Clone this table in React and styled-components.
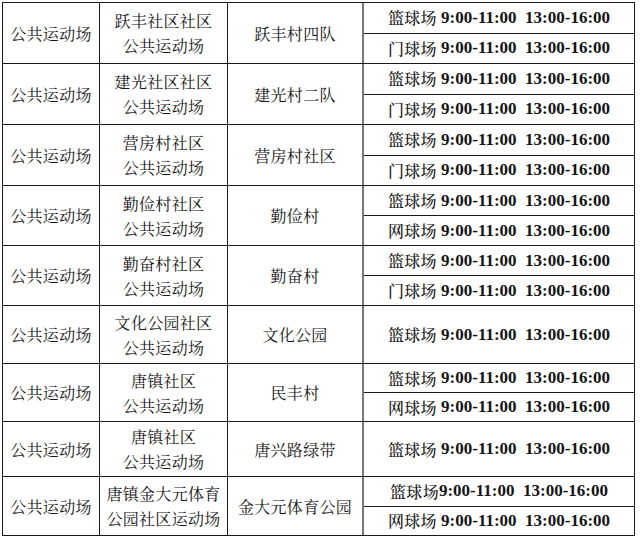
import React from "react";
import styled, { createGlobalStyle } from "styled-components";

const Global = createGlobalStyle`
  html, body { margin: 0; padding: 0; background: #fff; }
  body {
    font-family: "Noto Serif CJK SC", "Liberation Serif", "Noto Sans CJK SC", serif;
    color: #141414;
  }
`;

const Table = styled.div`
  margin: 2px 0 0 2px;
  width: 633px;
  border-top: 1.5px solid #1a1a1a;
  border-left: 1.5px solid #1a1a1a;
  border-right: 1.5px solid #1a1a1a;
  box-sizing: border-box;
`;

const Group = styled.div`
  display: grid;
  grid-template-columns: 97px 128px 136px 1fr;
  height: ${(p) => p.$h}px;
  border-bottom: 1.5px solid #1a1a1a;
  box-sizing: border-box;
`;

const Cell = styled.div`
  display: flex;
  align-items: center;
  justify-content: center;
  text-align: center;
  font-family: "Noto Serif CJK SC", "Noto Sans CJK SC", serif;
  font-size: 16px;
  font-weight: 400;
  line-height: 25px;
  border-right: ${(p) => (p.$grey ? "2px solid #777" : "1.5px solid #1a1a1a")};
  white-space: pre-line;
  letter-spacing: 0.3px;
`;

const Schedule = styled.div`
  display: flex;
  flex-direction: column;
`;

const Slot = styled.div`
  flex: 1;
  display: flex;
  align-items: center;
  justify-content: center;
  white-space: pre;
  & + & {
    border-top: 1.5px solid #1a1a1a;
  }
`;

const Court = styled.span`
  font-family: "Noto Serif CJK SC", "Noto Sans CJK SC", serif;
  font-size: 16px;
  font-weight: 500;
  letter-spacing: 0.3px;
`;

const Time = styled.span`
  font-family: "Liberation Serif", serif;
  font-size: 17px;
  font-weight: 700;
`;

const rows = [
  { h: 61, a: "跃丰社区社区\n公共运动场", b: "跃丰村四队", s: [["篮球场", " "], ["门球场", " "]] },
  { h: 61, a: "建光社区社区\n公共运动场", b: "建光村二队", s: [["篮球场", " "], ["门球场", " "]] },
  { h: 61, a: "营房村社区\n公共运动场", b: "营房村社区", s: [["篮球场", " "], ["门球场", " "]] },
  { h: 60, a: "勤俭村社区\n公共运动场", b: "勤俭村", s: [["篮球场", " "], ["网球场", " "]] },
  { h: 60, a: "勤奋村社区\n公共运动场", b: "勤奋村", s: [["篮球场", " "], ["门球场", " "]] },
  { h: 58, a: "文化公园社区\n公共运动场", b: "文化公园", s: [["篮球场", " "]] },
  { h: 58, a: "唐镇社区\n公共运动场", b: "民丰村", s: [["篮球场", " "], ["网球场", " "]] },
  { h: 55, a: "唐镇社区\n公共运动场", b: "唐兴路绿带", s: [["篮球场", " "]] },
  { h: 59, a: "唐镇金大元体育\n公园社区运动场", b: "金大元体育公园", s: [["篮球场", ""], ["网球场", " "]] },
];

export default function App() {
  return (
    <>
      <Global />
      <Table>
        {rows.map((r, i) => (
          <Group key={i} $h={r.h}>
            <Cell>公共运动场</Cell>
            <Cell>{r.a}</Cell>
            <Cell $grey>{r.b}</Cell>
            <Schedule>
              {r.s.map(([c, sp], j) => (
                <Slot key={j}>
                  <Court>{c}</Court>
                  <Time>{sp + "9:00-11:00  13:00-16:00"}</Time>
                </Slot>
              ))}
            </Schedule>
          </Group>
        ))}
      </Table>
    </>
  );
}
